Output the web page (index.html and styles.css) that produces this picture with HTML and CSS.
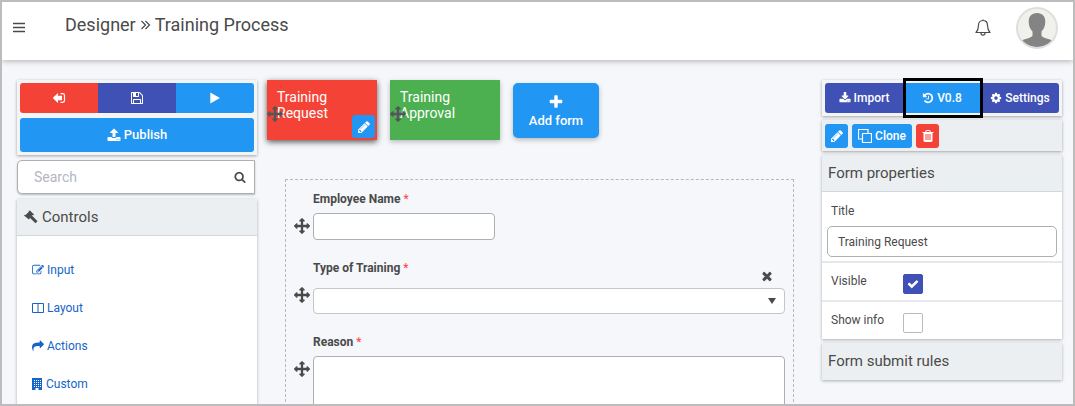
FILE: index.html
```html
<!DOCTYPE html>
<html lang="en">
<head>
<meta charset="utf-8">
<title>Designer - Training Process</title>
<link rel="stylesheet" href="styles.css">
</head>
<body>
<svg class="sprite" aria-hidden="true">
  <symbol id="i-pencil" viewBox="0 0 1792 1792"><path d="M491 1536l91-91-235-235-91 91v107h128v128h107zm523-928q0-22-22-22-10 0-17 7l-542 542q-7 7-7 17 0 22 22 22 10 0 17-7l542-542q7-7 7-17zm-54-192l416 416-832 832h-416v-416zm683 96q0 53-37 90l-166 166-416-416 166-165q36-38 90-38 53 0 91 38l235 234q37 39 37 91z"/></symbol>
  <symbol id="i-play" viewBox="0 0 1792 1792"><path d="M1576 927l-1328 738q-23 13-39.500 3t-16.500-36v-1472q0-26 16.500-36t39.500 3l1328 738q23 13 23 31t-23 31z"/></symbol>
  <symbol id="i-plus" viewBox="0 0 1792 1792"><path d="M1600 736v192q0 40-28 68t-68 28h-416v416q0 40-28 68t-68 28h-192q-40 0-68-28t-28-68v-416h-416q-40 0-68-28t-28-68v-192q0-40 28-68t68-28h416v-416q0-40 28-68t68-28h192q40 0 68 28t28 68v416h416q40 0 68 28t28 68z"/></symbol>
  <symbol id="i-move" viewBox="0 0 1792 1792"><path d="M1792 896q0 26-19 45l-256 256q-19 19-45 19t-45-19-19-45v-128h-384v384h128q26 0 45 19t19 45-19 45l-256 256q-19 19-45 19t-45-19l-256-256q-19-19-19-45t19-45 45-19h128v-384h-384v128q0 26-19 45t-45 19-45-19l-256-256q-19-19-19-45t19-45l256-256q19-19 45-19t45 19 19 45v128h384v-384h-128q-26 0-45-19t-19-45 19-45l256-256q19-19 45-19t45 19l256 256q19 19 19 45t-19 45-45 19h-128v384h384v-128q0-26 19-45t45-19 45 19l256 256q19 19 19 45z"/></symbol>
  <symbol id="i-search" viewBox="0 0 1792 1792"><path d="M1216 832q0-185-131.500-316.500t-316.500-131.500-316.500 131.500-131.500 316.500 131.500 316.500 316.500 131.500 316.500-131.500 131.500-316.500zm512 832q0 52-38 90t-90 38q-54 0-90-38l-343-342q-179 124-399 124-143 0-273.500-55.500t-225-150-150-225-55.500-273.500 55.500-273.500 150-225 225-150 273.500-55.500 273.500 55.500 225 150 150 225 55.500 273.500q0 220-124 399l343 343q37 37 37 90z"/></symbol>
  <symbol id="i-upload" viewBox="0 0 1792 1792"><path d="M1344 1472q0-26-19-45t-45-19-45 19-19 45 19 45 45 19 45-19 19-45zm256 0q0-26-19-45t-45-19-45 19-19 45 19 45 45 19 45-19 19-45zm128-224v320q0 40-28 68t-68 28h-1472q-40 0-68-28t-28-68v-320q0-40 28-68t68-28h427q21 56 70.500 92t110.500 36h256q61 0 110.500-36t70.500-92h427q40 0 68 28t28 68zm-325-648q-17 40-59 40h-256v448q0 26-19 45t-45 19h-256q-26 0-45-19t-19-45v-448h-256q-42 0-59-40-17-39 14-69l448-448q18-19 45-19t45 19l448 448q31 30 14 69z"/></symbol>
  <symbol id="i-download" viewBox="0 0 1792 1792"><path d="M1344 1344q0-26-19-45t-45-19-45 19-19 45 19 45 45 19 45-19 19-45zm256 0q0-26-19-45t-45-19-45 19-19 45 19 45 45 19 45-19 19-45zm128-224v320q0 40-28 68t-68 28h-1472q-40 0-68-28t-28-68v-320q0-40 28-68t68-28h465l135 136q58 56 136 56t136-56l136-136h464q40 0 68 28t28 68zm-325-569q17 41-14 70l-448 448q-18 19-45 19t-45-19l-448-448q-31-29-14-70 17-39 59-39h256v-448q0-26 19-45t45-19h256q26 0 45 19t19 45v448h256q42 0 59 39z"/></symbol>
  <symbol id="i-save" viewBox="0 0 1792 1792"><path d="M512 1536h768v-384h-768v384zm896 0h128v-896q0-14-10-38.500t-20-34.500l-281-281q-10-10-34-20t-39-10v416q0 40-28 68t-68 28h-576q-40 0-68-28t-28-68v-416h-128v1280h128v-416q0-40 28-68t68-28h832q40 0 68 28t28 68v416zm-384-928v-320q0-13-9.500-22.500t-22.500-9.500h-192q-13 0-22.500 9.500t-9.500 22.500v320q0 13 9.500 22.500t22.500 9.500h192q13 0 22.500-9.500t9.500-22.500zm640 32v928q0 40-28 68t-68 28h-1344q-40 0-68-28t-28-68v-1344q0-40 28-68t68-28h928q40 0 88 20t76 48l280 280q28 28 48 76t20 88z"/></symbol>
  <symbol id="i-history" viewBox="0 0 1792 1792"><path d="M1664 896q0 156-61 298t-164 245-245 164-298 61q-172 0-327-72.500t-264-204.500q-7-10-6.500-22.500t8.500-20.500l137-138q10-9 25-9 16 2 23 12 73 95 179 147t225 52q104 0 198.500-40.500t163.500-109.500 109.500-163.500 40.500-198.500-40.500-198.500-109.500-163.500-163.500-109.500-198.500-40.500q-98 0-188 35.500t-160 101.500l137 138q31 30 14 69-17 40-59 40h-448q-26 0-45-19t-19-45v-448q0-42 40-59 39-17 69 14l130 129q107-101 244.500-156.500t284.500-55.500q156 0 298 61t245 164 164 245 61 298zm-640-288v448q0 14-9 23t-23 9h-320q-14 0-23-9t-9-23v-64q0-14 9-23t23-9h224v-352q0-14 9-23t23-9h64q14 0 23 9t9 23z"/></symbol>
  <symbol id="i-cog" viewBox="0 0 1792 1792"><path d="M1152 896q0-106-75-181t-181-75-181 75-75 181 75 181 181 75 181-75 75-181zm512-109v222q0 12-8 23t-20 13l-185 28q-19 54-39 91 35 50 107 138 10 12 10 25t-9 23q-27 37-99 108t-94 71q-12 0-26-9l-138-108q-44 23-91 38-16 136-29 186-7 28-36 28h-222q-14 0-24.500-8.500t-11.500-21.500l-28-184q-49-16-90-37l-141 107q-10 9-25 9-14 0-25-11-126-114-165-168-7-10-7-23 0-12 8-23 15-21 51-66.500t54-70.500q-27-50-41-99l-183-27q-13-2-21-12.500t-8-23.500v-222q0-12 8-23t19-13l186-28q14-46 39-92-40-57-107-138-10-12-10-24 0-10 9-23 26-36 98.500-107.500t94.500-71.500q13 0 26 10l138 107q44-23 91-38 16-136 29-186 7-28 36-28h222q14 0 24.500 8.500t11.500 21.500l28 184q49 16 90 37l142-107q9-9 24-9 13 0 25 10 129 119 165 170 7 8 7 22 0 12-8 23-15 21-51 66.500t-54 70.500q26 50 41 98l183 28q13 2 21 12.500t8 23.500z"/></symbol>
  <symbol id="i-trash" viewBox="0 0 1792 1792"><path d="M704 1376v-704q0-14-9-23t-23-9h-64q-14 0-23 9t-9 23v704q0 14 9 23t23 9h64q14 0 23-9t9-23zm256 0v-704q0-14-9-23t-23-9h-64q-14 0-23 9t-9 23v704q0 14 9 23t23 9h64q14 0 23-9t9-23zm256 0v-704q0-14-9-23t-23-9h-64q-14 0-23 9t-9 23v704q0 14 9 23t23 9h64q14 0 23-9t9-23zm-544-992h448l-48-117q-7-9-17-11h-317q-10 2-17 11zm928 32v64q0 14-9 23t-23 9h-96v948q0 83-47 143.500t-113 60.500h-832q-66 0-113-58.500t-47-141.500v-952h-96q-14 0-23-9t-9-23v-64q0-14 9-23t23-9h309l70-167q15-37 54-63t79-26h320q40 0 79 26t54 63l70 167h309q14 0 23 9t9 23z"/></symbol>
  <symbol id="i-check" viewBox="0 0 1792 1792"><path d="M1671 566q0 40-28 68l-724 724-136 136q-28 28-68 28t-68-28l-136-136-362-362q-28-28-28-68t28-68l136-136q28-28 68-28t68 28l294 295 656-657q28-28 68-28t68 28l136 136q28 28 28 68z"/></symbol>
  <symbol id="i-times" viewBox="0 0 1792 1792"><path d="M1490 1322q0 40-28 68l-136 136q-28 28-68 28t-68-28l-294-294-294 294q-28 28-68 28t-68-28l-136-136q-28-28-28-68t28-68l294-294-294-294q-28-28-28-68t28-68l136-136q28-28 68-28t68 28l294 294 294-294q28-28 68-28t68 28l136 136q28 28 28 68t-28 68l-294 294 294 294q28 28 28 68z"/></symbol>
  <symbol id="i-share" viewBox="0 0 1792 1792"><path d="M1792 640q0 26-19 45l-512 512q-19 19-45 19t-45-19-19-45v-256h-224q-98 0-175.500 6t-154 21.500-133 42.500-105.500 69.500-80 101-48.500 138.500-17.500 181q0 55 5 123 0 6 2.500 23.500t2.500 26.500q0 15-8.500 25t-23.500 10q-16 0-28-17-7-9-13-22t-13.500-30-10.500-24q-127-285-127-451 0-199 53-333 162-403 875-403h224v-256q0-26 19-45t45-19 45 19l512 512q19 19 19 45z"/></symbol>
  <symbol id="i-edit" viewBox="0 0 1792 1792"><path d="M888 1184l116-116-152-152-116 116v56h96v96h56zm440-720q-16-16-33 1l-350 350q-17 17-1 33t33-1l350-350q17-17 1-33zm80 594v190q0 119-84.500 203.500t-203.500 84.500h-832q-119 0-203.500-84.500t-84.500-203.500v-832q0-119 84.500-203.500t203.500-84.500h832q63 0 117 25 15 7 18 23 3 17-9 29l-49 49q-14 14-32 8-23-6-45-6h-832q-66 0-113 47t-47 113v832q0 66 47 113t113 47h832q66 0 113-47t47-113v-126q0-13 9-22l64-64q15-15 35-7t20 29zm-96-738l288 288-672 672h-288v-288zm444 132l-92 92-288-288 92-92q28-28 68-28t68 28l152 152q28 28 28 68t-28 68z"/></symbol>
  <symbol id="i-exit" viewBox="0 0 14 14"><path d="M1.200 6.600 6 2v2.700h4v4.600H6V12L1.200 7.400a.5.5 0 0 1 0-.8z"/><path d="M8.500 2.700h2.300a1.700 1.700 0 0 1 1.700 1.700v5.200a1.700 1.700 0 0 1-1.700 1.700H8.500" fill="none" stroke="currentColor" stroke-width="1.200"/></symbol>
  <symbol id="i-columns" viewBox="0 0 12 12"><path d="M.5 1.500h11v9H.5zM6 1.500v9" fill="none" stroke="currentColor"/></symbol>
  <symbol id="i-building" viewBox="0 0 11 12"><path fill-rule="evenodd" d="M0 0h10v12H6.500v-2h-3v2H0zM2 2v1h1V2zm2 0v1h1V2zm2 0v1h1V2zm2 0v1h1V2zM2 4v1h1V4zm2 0v1h1V4zm2 0v1h1V4zm2 0v1h1V4zM2 6v1h1V6zm2 0v1h1V6zm2 0v1h1V6zm2 0v1h1V6zM2 8v1h1V8zm2 0v1h1V8zm2 0v1h1V8zm2 0v1h1V8z"/></symbol>
  <symbol id="i-clone" viewBox="0 0 14 14"><path d="M4.500 4.500h9v9h-9zM10 4V.5H.5V10H4" fill="none" stroke="currentColor" stroke-width="1.200" stroke-linejoin="round"/></symbol>
  <symbol id="i-gavel" viewBox="0 0 16 16"><path d="M6.900.9 11 5l-.9.900-.7-.3-2.900 2.900.3.700-.9.900L1 6.100l.9-.9.700.2 3.300-3.200-.2-.6z" transform="translate(0 .5)"/><path d="m7.600 7.400 5.900 5.800" stroke="currentColor" stroke-width="3"/></symbol>
  <symbol id="i-bars" viewBox="0 0 12 12"><path d="M0 1.500h12M0 5.500h12M0 9.500h12" stroke="currentColor" stroke-width="1.600"/></symbol>
  <symbol id="i-raquo" viewBox="0 0 10 12"><path d="m1 2 4 4-4 4M5 2l4 4-4 4" fill="none" stroke="currentColor" stroke-width="1.200"/></symbol>
  <symbol id="i-bell" viewBox="0 0 16 18"><path d="M8 1.500C5 1.500 3.500 3.700 3.500 6.200c0 4-1 5.600-2.500 7.300h14c-1.500-1.700-2.500-3.300-2.500-7.300C12.500 3.700 11 1.500 8 1.500zM8 .5v1M6 14c0 1.200.8 2.200 2 2.200s2-1 2-2.200" fill="none" stroke="currentColor" stroke-width="1.200" stroke-linejoin="round"/></symbol>
  <symbol id="i-caret" viewBox="0 0 8 6"><path d="M0 0h8L4 6z"/></symbol>
</svg>

<div class="frame">
  <header class="topbar">
    <button class="bare menu" aria-label="Menu"><svg class="icon s12"><use href="#i-bars"/></svg></button>
    <h1 class="title">Designer <svg class="icon raquo" role="img" aria-label="to"><use href="#i-raquo"/></svg> Training Process</h1>
    <button class="bare" aria-label="Notifications"><svg class="icon bell"><use href="#i-bell"/></svg></button>
    <button class="bare avatar" aria-label="Account">
      <svg class="portrait" viewBox="0 0 38 38"><path fill="#848484" d="M19 4c5.500 0 8.500 3.500 8.300 9-.1 4.500-1.800 7.500-3.800 9.500v4c0 2.500 9 3 12.500 6.500V38H2v-5c3.500-3.500 12.500-4 12.500-6.500v-4c-2-2-3.700-5-3.800-9.500C10.500 7.500 13.500 4 19 4z"/></svg>
    </button>
  </header>

  <main class="layout">
    <aside class="side tools-side">
      <section class="panel actions">
        <div class="group">
          <button class="btn red" aria-label="Exit"><svg class="icon s14"><use href="#i-exit"/></svg></button>
          <button class="btn indigo" aria-label="Save"><svg class="icon s14"><use href="#i-save"/></svg></button>
          <button class="btn blue" aria-label="Run"><svg class="icon s12"><use href="#i-play"/></svg></button>
        </div>
        <button class="btn blue publish"><svg class="icon s14"><use href="#i-upload"/></svg>Publish</button>
      </section>
      <div class="search">
        <input type="text" placeholder="Search" aria-label="Search">
        <svg class="icon s12"><use href="#i-search"/></svg>
      </div>
      <section class="controls">
        <h2 class="heading"><svg class="icon s16"><use href="#i-gavel"/></svg>Controls</h2>
        <nav class="links">
          <a href="#input"><svg class="icon s12"><use href="#i-edit"/></svg>Input</a>
          <a href="#layout"><svg class="icon s12"><use href="#i-columns"/></svg>Layout</a>
          <a href="#actions"><svg class="icon s12"><use href="#i-share"/></svg>Actions</a>
          <a href="#custom"><svg class="icon building"><use href="#i-building"/></svg>Custom</a>
        </nav>
      </section>
    </aside>

    <section class="canvas">
      <div class="cards">
        <article class="card red active">Training Request
          <svg class="icon s16 grip"><use href="#i-move"/></svg>
          <button class="btn blue square" aria-label="Edit form"><svg class="icon s14"><use href="#i-pencil"/></svg></button>
        </article>
        <article class="card green">Training Approval
          <svg class="icon s16 grip"><use href="#i-move"/></svg>
        </article>
        <button class="btn blue add"><svg class="icon s16"><use href="#i-plus"/></svg>Add form</button>
      </div>
      <form class="sheet">
        <div class="row">
          <svg class="icon s16 handle"><use href="#i-move"/></svg>
          <div class="field">
            <label for="name">Employee Name <span class="req">*</span></label>
            <input id="name" class="box short" type="text">
          </div>
        </div>
        <div class="row">
          <svg class="icon s16 handle"><use href="#i-move"/></svg>
          <div class="field roomy">
            <label for="type">Type of Training <span class="req">*</span></label>
            <div class="pick">
              <select id="type" class="box"><option></option></select>
              <svg class="icon caret"><use href="#i-caret"/></svg>
            </div>
            <button type="button" class="bare remove" aria-label="Remove"><svg class="icon s14"><use href="#i-times"/></svg></button>
          </div>
        </div>
        <div class="row">
          <svg class="icon s16 handle"><use href="#i-move"/></svg>
          <div class="field">
            <label for="reason">Reason <span class="req">*</span></label>
            <textarea id="reason" class="box area"></textarea>
          </div>
        </div>
      </form>
    </section>

    <aside class="side">
      <section class="panel">
        <div class="group">
          <button class="btn indigo"><svg class="icon s12"><use href="#i-download"/></svg>Import</button>
          <button class="btn blue marked"><svg class="icon s12"><use href="#i-history"/></svg>V0.8</button>
          <button class="btn indigo"><svg class="icon s12"><use href="#i-cog"/></svg>Settings</button>
        </div>
      </section>
      <section class="panel tools">
        <button class="btn blue square" aria-label="Edit"><svg class="icon s14"><use href="#i-pencil"/></svg></button>
        <button class="btn blue clone"><svg class="icon s14"><use href="#i-clone"/></svg>Clone</button>
        <button class="btn red square" aria-label="Delete"><svg class="icon s14"><use href="#i-trash"/></svg></button>
      </section>
      <section class="props">
        <h2 class="heading">Form properties</h2>
        <div class="prop">
          <label for="title">Title</label>
          <input id="title" class="box text" type="text" value="Training Request">
        </div>
        <div class="prop inline">
          <label for="visible">Visible</label>
          <span class="tick"><input id="visible" type="checkbox" checked><svg class="icon s14"><use href="#i-check"/></svg></span>
        </div>
        <div class="prop inline">
          <label for="info">Show info</label>
          <span class="tick"><input id="info" type="checkbox"><svg class="icon s14"><use href="#i-check"/></svg></span>
        </div>
      </section>
      <section class="props">
        <h2 class="heading closed">Form submit rules</h2>
      </section>
    </aside>
  </main>
</div>
</body>
</html>
```

FILE: styles.css
```css
* { box-sizing: border-box; }
body { margin: 0; font-family: Roboto, "Liberation Sans", sans-serif; font-size: 14px; color: #4a4a4a; }
h1, h2 { margin: 0; font-weight: 400; }
button, input, select, textarea { font: inherit; color: inherit; margin: 0; }
button { cursor: pointer; }
.sprite { position: absolute; width: 0; height: 0; }
.icon { fill: currentColor; flex: none; display: block; }
.s12 { width: 12px; height: 12px; }
.s14 { width: 14px; height: 14px; }
.s16 { width: 16px; height: 16px; }
.building { width: 11px; height: 12px; }

.frame { height: 100vh; overflow: hidden; border: 2px solid #bcbcbc; background: #f5f7fa; display: flex; flex-direction: column; }

.topbar { flex: none; height: 58px; padding: 0 15px 6px 11px; display: flex; align-items: center; background: #fff; box-shadow: 0 1px 6px rgba(0, 0, 0, .3); }
.bare { border: 0; padding: 0; background: none; display: flex; }
.menu { width: 52px; }
.title { flex: 1; display: flex; align-items: center; gap: 4px; font-size: 18px; line-height: 24px; padding-bottom: 6px; }
.raquo { width: 11px; height: 12px; }
.bell { width: 16px; height: 18px; }
.avatar { width: 42px; height: 42px; margin-left: 25px; border: 2px solid #dedede; border-radius: 50%; overflow: hidden; background: #f1f1ec; }
.portrait { width: 100%; height: 100%; }

.layout { display: grid; grid-template-columns: 240px 1fr 240px; column-gap: 6px; padding: 20px 11px 0 15px; align-items: start; }
.side { display: flex; flex-direction: column; gap: 4px; }
.tools-side { gap: 5px; }
.panel { padding: 3px; background: #f3f4f5; box-shadow: 0 1px 3px rgba(0, 0, 0, .35); }
.actions { display: flex; flex-direction: column; gap: 5px; }
.group { display: grid; grid-template-columns: 1fr 1fr 1fr; }
.btn { border: 0; border-radius: 3px; padding: 0; height: 30px; color: #fff; display: flex; align-items: center; justify-content: center; gap: 3px; font-size: 12px; font-weight: 500; line-height: 16px; white-space: nowrap; }
.group .btn { border-radius: 0; }
.group .btn:first-child { border-radius: 3px 0 0 3px; }
.group .btn:last-child { border-radius: 0 3px 3px 0; }
.red { background: #f44336; }
.indigo { background: #3f51b5; }
.blue { background: #2196f3; }
.green { background: #4caf50; }
.publish { height: 34px; font-size: 13px; }
.marked { position: relative; }
.marked::after { content: ""; position: absolute; inset: -5px -2px -5px 0; border: 3px solid #000; }

.search { display: flex; align-items: center; height: 34px; margin-right: 2px; padding-right: 8px; background: #fff; border: 1px solid #adb0b3; border-radius: 5px 0 0 5px; box-shadow: 0 1px 2px rgba(0, 0, 0, .25); }
.search input { flex: 1; min-width: 0; border: 0; background: none; padding: 0 16px; outline: 0; }
.search input::placeholder { color: #b3b7c4; opacity: 1; }

.controls, .props { background: #fff; box-shadow: 0 1px 3px rgba(0, 0, 0, .3); }
.heading { display: flex; align-items: center; gap: 3px; height: 37px; padding: 0 6px; font-size: 15px; line-height: 20px; background: #eceff1; border-bottom: 1px solid #cfd8dc; }
.closed { border-bottom-color: #eceff1; }
.links { display: flex; flex-direction: column; gap: 20px; padding: 25px 15px 40px; font-size: 12px; line-height: 18px; }
.links a { display: flex; align-items: center; gap: 3px; color: #1565c8; text-decoration: none; }

.cards { display: flex; gap: 13px; padding-left: 4px; }
.card { position: relative; width: 110px; height: 60px; padding: 9px 30px 0 10px; color: #fff; line-height: 16px; box-shadow: 0 2px 5px rgba(0, 0, 0, .25); }
.active { box-shadow: 0 2px 6px rgba(0, 0, 0, .65); }
.grip { position: absolute; left: 0; top: 26px; color: #555; }
.card .square { position: absolute; right: 2px; bottom: 2px; }
.square { width: 23px; height: 23px; }
.add { flex-direction: column; width: 86px; height: 55px; margin-top: 3px; padding-top: 2px; border-radius: 5px; font-size: 13px; box-shadow: 0 2px 5px rgba(0, 0, 0, .25); }

.sheet { margin: 39px 22px 0 22px; border: 1px dashed #b5b8bd; padding: 10px 8px 30px 8px; display: flex; flex-direction: column; gap: 19px; }
.row { display: flex; gap: 3px; align-items: flex-start; }
.handle { margin-top: 28px; }
.field { position: relative; flex: 1; display: flex; flex-direction: column; gap: 5px; font-size: 12px; line-height: 18px; }
.field label { font-weight: 700; }
.roomy { gap: 11px; }
.req { color: #ff4040; font-weight: 400; }
.box { width: 100%; height: 27px; border: 1px solid #adb0b3; border-radius: 4px; background: #fff; padding: 0 10px; }
.short { max-width: 182px; }
.area { height: 80px; resize: none; display: block; }
.pick { display: grid; align-items: center; }
.pick select { appearance: none; grid-area: 1 / 1; height: 26px; border-color: #c4c6c8; }
.caret { grid-area: 1 / 1; justify-self: end; margin-right: 9px; width: 8px; height: 6px; pointer-events: none; }
.remove { position: absolute; right: 11px; top: 10px; }

.tools { display: flex; align-items: center; gap: 4px; height: 31px; background: #eceff1; }
.tools .btn { height: 24px; }
.clone { width: 60px; }

.prop { display: flex; flex-direction: column; gap: 6px; padding: 10px 5px 4px; font-size: 12px; line-height: 18px; border-bottom: 2px solid #e6e9eb; }
.prop:last-child { border-bottom: 0; }
.prop label { padding-left: 4px; }
.text { height: 31px; border-radius: 5px; }
.inline { flex-direction: row; gap: 0; padding: 9px 5px 6px; }
.inline label { width: 76px; }
.tick { display: grid; place-items: center; margin-top: 2px; width: 20px; height: 20px; }
.tick input { appearance: none; grid-area: 1 / 1; width: 20px; height: 20px; border: 1px solid #bbb; border-radius: 2px; background: #fff; }
.tick input:checked { background: #3f51b5; border-color: #3f51b5; }
.tick .icon { grid-area: 1 / 1; color: #fff; pointer-events: none; z-index: 1; width: 12px; height: 12px; }
```
